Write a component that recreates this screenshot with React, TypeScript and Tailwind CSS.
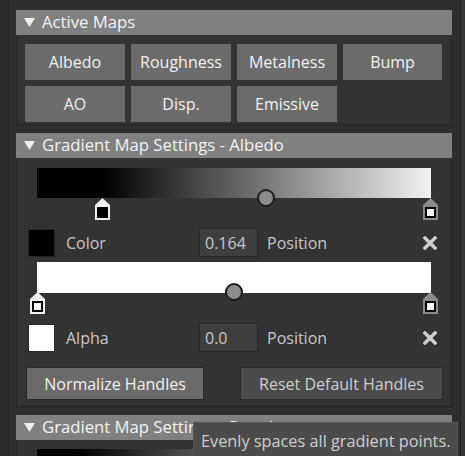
import React from 'react'

const font = { fontFamily: '"Open Sans", "Noto Sans", sans-serif' }

const Caret = () => (
  <svg width="11" height="9" viewBox="0 0 11 9" className="shrink-0">
    <polygon points="0,0 11,0 5.5,9" fill="#f0f0f0" />
  </svg>
)

const Header = ({ title }: { title: string }) => (
  <div className="h-[25px] bg-[#808080] flex items-center pl-[8px] gap-[7px] text-[16.7px] text-[#f4f4f4]">
    <Caret />
    <span className="leading-none whitespace-nowrap">{title}</span>
  </div>
)

// stop handle under a gradient bar
const Handle = ({ x, outline, fill }: { x: number; outline: string; fill: 'black' | 'white' }) => (
  <svg
    width="15"
    height="22"
    viewBox="0 0 15 22"
    className="absolute top-[30px]"
    style={{ left: x - 7.5 }}
  >
    <polygon points="7.5,0 15,7 15,22 0,22 0,7" fill={outline} />
    {fill === 'black' ? (
      <rect x="2" y="9" width="11" height="11" fill="#000" />
    ) : (
      <>
        <rect x="2" y="9" width="11" height="11" fill="#000" />
        <rect x="4" y="11" width="7" height="7" fill="#fff" />
      </>
    )}
  </svg>
)

const Midpoint = ({ x }: { x: number }) => (
  <div
    className="absolute top-[21px] w-[18px] h-[18px] rounded-full bg-[#8c8c8c] border-2 border-[#1c1c1c]"
    style={{ left: x - 9 }}
  />
)

const XIcon = () => (
  <svg width="14" height="14" viewBox="0 0 14 14">
    <path d="M2 2 L12 12 M12 2 L2 12" stroke="#cfcfcf" strokeWidth="3.4" strokeLinecap="square" />
  </svg>
)

const StopRow = ({ swatch, label, value }: { swatch: string; label: string; value: string }) => (
  <div className="flex items-center h-[29px] pl-[11px] pr-[14px] text-[16px] text-[#c8c8c8]">
    <div className={`w-[27px] h-[28px] border border-[#262626] ${swatch}`} />
    <span className="ml-[11px] w-[133px]">{label}</span>
    <div className="w-[59px] h-[29px] bg-[#3e3e3e] border border-[#2a2a2a] flex items-center pl-[5px]">{value}</div>
    <span className="ml-[9px]">Position</span>
    <div className="ml-auto"><XIcon /></div>
  </div>
)

const maps = ['Albedo', 'Roughness', 'Metalness', 'Bump', 'AO', 'Disp.', 'Emissive']

export default function App() {
  return (
    <div className="relative w-[465px] h-[456px] overflow-hidden bg-[#2b2b2b] flex" style={font}>
      <div className="w-[9px] shrink-0 border-r border-[#242424]" />
      <div className="w-[452px] shrink-0 bg-[#2e2e2e] border-r border-[#242424] pl-[7px] pr-[8px] pt-[10px] flex flex-col gap-[8px]">
        {/* Active Maps */}
        <div>
          <Header title="Active Maps" />
          <div className="bg-[#333333] border border-t-0 border-[#262626] pl-[8px] pr-[8px] pt-[9px] pb-[2px]">
            <div className="grid grid-cols-[100px_100px_100px_99px] gap-[6px]">
              {maps.map((m) => (
                <div key={m} className="h-[36px] bg-[#6b6b6b] flex items-center justify-center text-[16px] text-[#f2f2f2]">
                  {m}
                </div>
              ))}
            </div>
          </div>
        </div>

        {/* Gradient Map Settings - Albedo */}
        <div>
          <Header title="Gradient Map Settings - Albedo" />
          <div className="bg-[#333333] border border-t-0 border-[#262626] pt-[10px] pb-[6px]">
            <div className="relative h-[52px] mx-[20px]">
              <div className="h-[30px] bg-[linear-gradient(to_right,#000_0%,#000_16.4%,#f2f2f2_100%)]" />
              <Midpoint x={229} />
              <Handle x={65.5} outline="#f0f0f0" fill="black" />
              <Handle x={393.5} outline="#8c8c8c" fill="white" />
            </div>
            <div className="mt-[8px]">
              <StopRow swatch="bg-black" label="Color" value="0.164" />
            </div>
            <div className="relative h-[52px] mx-[20px] mt-[5px]">
              <div className="h-[31px] bg-white" />
              <Midpoint x={197} />
              <Handle x={0.5} outline="#f0f0f0" fill="white" />
              <Handle x={393.5} outline="#8c8c8c" fill="white" />
            </div>
            <div className="mt-[9px]">
              <StopRow swatch="bg-white" label="Alpha" value="0.0" />
            </div>
            <div className="flex items-center pl-[9px] pr-[8px] mt-[15px] text-[16px]">
              <div className="w-[178px] h-[33px] bg-[#6a6a6a] border border-[#2a2a2a] flex items-center justify-center text-[#f2f2f2]">
                Normalize Handles
              </div>
              <div className="ml-auto w-[203px] h-[33px] bg-[#4b4b4b] border border-[#2a2a2a] flex items-center justify-center text-[#d0d0d0]">
                Reset Default Handles
              </div>
            </div>
          </div>
        </div>

        {/* next section, cut off under the tooltip */}
        <div>
          <Header title="Gradient Map Settings - Roughness" />
          <div className="bg-[#333333] border border-t-0 border-[#262626] pt-[9px] h-[40px]">
            <div className="mx-[20px] h-[30px] bg-[linear-gradient(to_right,#000_0%,#000_10%,#f2f2f2_100%)]" />
          </div>
        </div>
      </div>
      <div className="flex-1 bg-[#353535]" />

      {/* tooltip */}
      <div className="absolute left-[193px] top-[422px] w-[265px] h-[50px] bg-[#4b4b4b] border border-[#575757] pl-[7px] pt-[6px] text-[16.3px] text-[#cfcfcf] whitespace-nowrap">
        Evenly spaces all gradient points.
      </div>
    </div>
  )
}
